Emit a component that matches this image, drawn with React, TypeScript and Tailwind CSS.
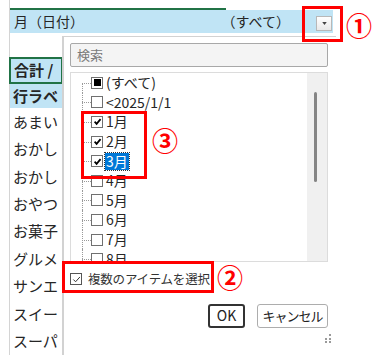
type CheckState = "on" | "off" | "mixed";

const items: { label: string; state: CheckState; selected?: boolean }[] = [
  { label: "(すべて)", state: "mixed" },
  { label: "<2025/1/1", state: "off" },
  { label: "1月", state: "on" },
  { label: "2月", state: "on" },
  { label: "3月", state: "on", selected: true },
  { label: "4月", state: "off" },
  { label: "5月", state: "off" },
  { label: "6月", state: "off" },
  { label: "7月", state: "off" },
  { label: "8月", state: "off" },
];

const rows = ["あまい", "おかし", "おかし", "おやつ", "お菓子", "グルメ", "サンエ", "スイー", "スーパ"];

function Box({ state }: { state: CheckState }) {
  return (
    <span className="flex h-[12px] w-[12px] shrink-0 items-center justify-center border border-[#707070] bg-white">
      {state === "mixed" && <span className="h-[7px] w-[7px] bg-black" />}
      {state === "on" && (
        <svg viewBox="0 0 10 10" className="h-[9px] w-[9px]">
          <path d="M1.8 5.2 L4 7.6 L8.4 2.4" fill="none" stroke="#000" strokeWidth="1.9" />
        </svg>
      )}
    </span>
  );
}

function Annotation({ n }: { n: string }) {
  return <span className="text-[26px] font-bold leading-none text-[#ff0000]">{n}</span>;
}

export default function App() {
  return (
    <div className="relative h-[355px] w-[375px] overflow-hidden bg-white font-['Noto_Sans_CJK_JP',sans-serif] text-[#262626]">
      {/* sheet underneath */}
      <div className="ml-[9px] flex h-full flex-col border-l border-[#d4d4d4] pt-[8px]">
        <div className="h-[2px] w-[216px] bg-[#217346]" />
        <div className="flex h-[25px] w-[323px] items-center bg-[#c0e4f5] pl-[4px] text-[14px]">
          <span>月（日付）</span>
          <span className="ml-auto">（すべて）</span>
          <span className="mb-[2px] ml-[26px] mr-[1px] flex h-[15px] w-[16px] items-center justify-center self-end border border-[#b8b8b8] bg-gradient-to-b from-white to-[#e9e9e9]">
            <svg viewBox="0 0 6 4" className="h-[3px] w-[5px]">
              <path d="M0 0 H6 L3 4 Z" fill="#444" />
            </svg>
          </span>
        </div>
        <div className="h-[27px]" />
        <div className="-ml-[1px] flex h-[27px] w-[54px] items-center border-2 border-[#217346] bg-[#c0e4f5] pl-[3px] text-[15px] font-bold whitespace-nowrap">
          合計 /
        </div>
        <div className="flex h-[27px] w-[53px] items-center bg-[#c0e4f5] pl-[3px] text-[15px] font-bold whitespace-nowrap">
          行ラベ
        </div>
        {rows.map((r, i) => (
          <div key={i} className="flex h-[27.4px] shrink-0 items-center pl-[3px] text-[15px] whitespace-nowrap">
            {r}
          </div>
        ))}
      </div>

      {/* filter popup */}
      <div className="absolute left-[62px] top-[36px] h-[330px] w-[274px] border-l-2 border-t border-[#d2d2d2] bg-white pl-[6px] pt-[6px]">
        <div className="flex h-[24px] w-[258px] items-center rounded-[2px] border border-[#a8a8a8] bg-[#f4f4f4] pl-[6px] text-[13px] text-[#7a7a7a]">
          検索
        </div>
        <div className="mt-[5px] flex h-[190px] w-[258px] border border-[#dcdcdc]">
          <div className="flex-1 overflow-hidden">
            {items.map((it, i) => (
              <div key={i} className="flex h-[19.6px] items-center text-[14px] whitespace-nowrap">
                <span className="w-[11px] shrink-0" />
                <span className="relative h-full w-[9px] shrink-0">
                  <span
                    className={`absolute bottom-0 left-0 border-l border-dotted border-[#9a9a9a] ${i === 0 ? "top-1/2" : "top-0"}`}
                  />
                  <span className="absolute left-0 right-0 top-1/2 border-t border-dotted border-[#9a9a9a]" />
                </span>
                <Box state={it.state} />
                {it.selected ? (
                  <span className="ml-[2px] bg-[#0078d7] px-[1px] leading-[17px] text-white outline outline-1 outline-dotted outline-[#333]">
                    {it.label}
                  </span>
                ) : (
                  <span className="ml-[3px]">{it.label}</span>
                )}
              </div>
            ))}
          </div>
          <div className="w-[20px] bg-[#f0f0f0] pl-[7px] pt-[19px]">
            <div className="h-[90px] w-[3px] rounded-full bg-[#858585]" />
          </div>
        </div>
        <div className="mt-[8px] flex items-center text-[12.5px] tracking-[-0.2px] text-[#333]">
          <span className="flex h-[12px] w-[12px] items-center justify-center border border-[#555]">
            <svg viewBox="0 0 10 10" className="h-[9px] w-[9px]">
              <path d="M1.5 5 L4 7.5 L8.8 2.2" fill="none" stroke="#333" strokeWidth="1.1" />
            </svg>
          </span>
          <span className="ml-[6px]">複数のアイテムを選択</span>
        </div>
        <div className="mt-[15px] flex w-[258px] justify-end gap-[12px] text-[14px] text-[#222]">
          <div className="flex h-[24px] w-[37px] items-center justify-center rounded-[3px] border-2 border-[#333]">OK</div>
          <div className="flex h-[24px] w-[71px] items-center justify-center rounded-[3px] border border-[#adadad] text-[13px] tracking-[-1px]">
            キャンセル
          </div>
        </div>
        <svg viewBox="0 0 9 9" className="ml-[253px] mt-[6px] h-[9px] w-[9px]">
          <rect x="6" y="0" width="2" height="2" fill="#9a9a9a" />
          <rect x="2" y="4" width="2" height="2" fill="#9a9a9a" />
          <rect x="6" y="4" width="2" height="2" fill="#9a9a9a" />
          <rect x="2" y="7" width="2" height="2" fill="#9a9a9a" />
          <rect x="6" y="7" width="2" height="2" fill="#9a9a9a" />
        </svg>
      </div>

      {/* red annotations */}
      <div className="absolute left-[302px] top-[6px] h-[36px] w-[41px] border-[3px] border-[#ff0000]" />
      <div className="absolute left-[346px] top-[12px]">
        <Annotation n="①" />
      </div>
      <div className="absolute left-[81px] top-[111px] h-[68px] w-[66px] border-[3px] border-[#ff0000]" />
      <div className="absolute left-[152px] top-[127px]">
        <Annotation n="③" />
      </div>
      <div className="absolute left-[62px] top-[261px] h-[32px] w-[152px] border-[3px] border-[#ff0000]" />
      <div className="absolute left-[217px] top-[264px]">
        <Annotation n="②" />
      </div>
    </div>
  );
}
